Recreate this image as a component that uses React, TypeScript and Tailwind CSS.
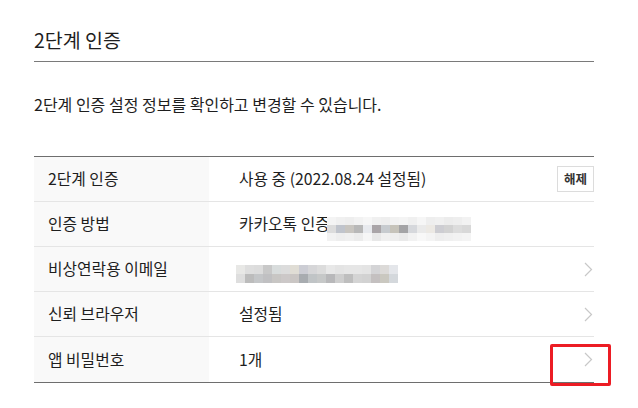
const FONT = 'font-["Noto_Sans_CJK_KR","Noto_Sans",sans-serif]';

// mosaic colours for masked personal info
const KAKAO_MASK = [
  ['#f4f4f4', '#f0f0f0', '#eeeeee', '#f2f2f2', '#f6f6f6', '#f0f0f0', '#eeeeee', '#f2f2f2', '#f4f4f4', '#f0f0f0', '#f6f6f6', '#eeeeee', '#f0f0f0', '#ececec', '#eeeeee', '#f2f2f2'],
  ['#dcdcdc', '#c0c4cc', '#c8c5c0', '#b8b8b8', '#e8eaee', '#aaa5a8', '#c7cbcf', '#c6c3ba', '#a4a4a6', '#d6d8dc', '#eaeaea', '#ece9e4', '#cdcdd2', '#d2d2d2', '#dcdcdc', '#d8d8d8'],
  ['#f2f2f2', '#eeeeee', '#f0f0f0', '#ececec', '#f6f6f6', '#e8e8e8', '#f0f0f0', '#eeeeee', '#eaeaea', '#f2f2f2', '#f8f8f8', '#f4f4f4', '#eeeeee', '#f0f0f0', '#f2f2f2', '#f4f4f4'],
];

const EMAIL_MASK = [
  ['#e8e8e6', '#dedede', '#dcdcdc', '#c8c8c8', '#d8dcdc', '#dcdcdc', '#e0ddd5', '#cccdd4', '#d6d6d8', '#dcdcdc', '#e8e8e8', '#e4e4e4', '#e6e6e6', '#e6e6e6', '#e4e4e4', '#d4d4d6', '#dcdad8', '#e4e6ea'],
  ['#dedede', '#bcbcbc', '#c4c6c8', '#c0c0c2', '#c8c6c4', '#ccc8c8', '#cac6c4', '#a8acb0', '#c0c4c6', '#c6c8c8', '#b8b8ba', '#cecece', '#bebebe', '#d4d4d4', '#d2d2d2', '#c4c0c0', '#cac8c0', '#d4d8dc'],
];

function Mosaic({ rows, cell, rowH }: { rows: string[][]; cell: number; rowH: number }) {
  return (
    <span className="inline-flex flex-col">
      {rows.map((r, i) => (
        <span key={i} className="flex">
          {r.map((c, j) => (
            <span key={j} style={{ background: c, width: cell, height: rowH }} />
          ))}
        </span>
      ))}
    </span>
  );
}

function Row({ label, children, right, last }: { label: string; children: React.ReactNode; right?: React.ReactNode; last?: boolean }) {
  return (
    <div className={`flex h-[45px] ${last ? '' : 'border-b border-[#e5e5e5]'}`}>
      <div className="flex w-[175px] flex-none items-center bg-[#f9f9f9] pl-[14px]">{label}</div>
      <div className="flex min-w-0 flex-1 items-center pl-[30px]">{children}</div>
      {right && <div className="flex items-center">{right}</div>}
    </div>
  );
}

const Chevron = () => (
  <svg width="9" height="15" viewBox="0 0 9 15" fill="none" stroke="#c8c8c8" strokeWidth="1.2" className="mr-[1px]">
    <path d="M1 1l6.5 6.5L1 14" />
  </svg>
);

export default function App() {
  return (
    <div className={`relative h-[408px] w-[638px] bg-white pl-[34px] pr-[44px] text-[#1e1e1e] ${FONT}`}>
      <h2 className="border-b border-[#7a7a7a] pb-[9px] pt-[27px] text-[19.5px] leading-[25px] font-normal">2단계 인증</h2>
      <p className="mt-[30px] text-[16px] leading-[24px]">2단계 인증 설정 정보를 확인하고 변경할 수 있습니다.</p>

      <div className="mt-[40px] border-y border-[#6e6e6e] text-[15.8px]">
        <Row
          label="2단계 인증"
          right={
            <button className="h-[26px] w-[37px] border border-[#dcdcdc] bg-white text-[12.5px] font-bold text-[#333]">해제</button>
          }
        >
          사용 중 (2022.08.24 설정됨)
        </Row>
        <Row label="인증 방법">
          카카오톡 인증
          <span className="ml-[-3px]">
            <Mosaic rows={KAKAO_MASK} cell={9} rowH={8} />
          </span>
        </Row>
        <Row label="비상연락용 이메일" right={<Chevron />}>
          <span className="ml-[-3px]">
            <Mosaic rows={EMAIL_MASK} cell={9} rowH={9} />
          </span>
        </Row>
        <Row label="신뢰 브라우저" right={<Chevron />}>
          설정됨
        </Row>
        <Row label="앱 비밀번호" right={<Chevron />} last>
          1개
        </Row>
      </div>

      <div className="absolute left-[550px] top-[344px] h-[42px] w-[61px] rounded-[2px] border-[3px] border-[#ec1c24]" />
    </div>
  );
}
